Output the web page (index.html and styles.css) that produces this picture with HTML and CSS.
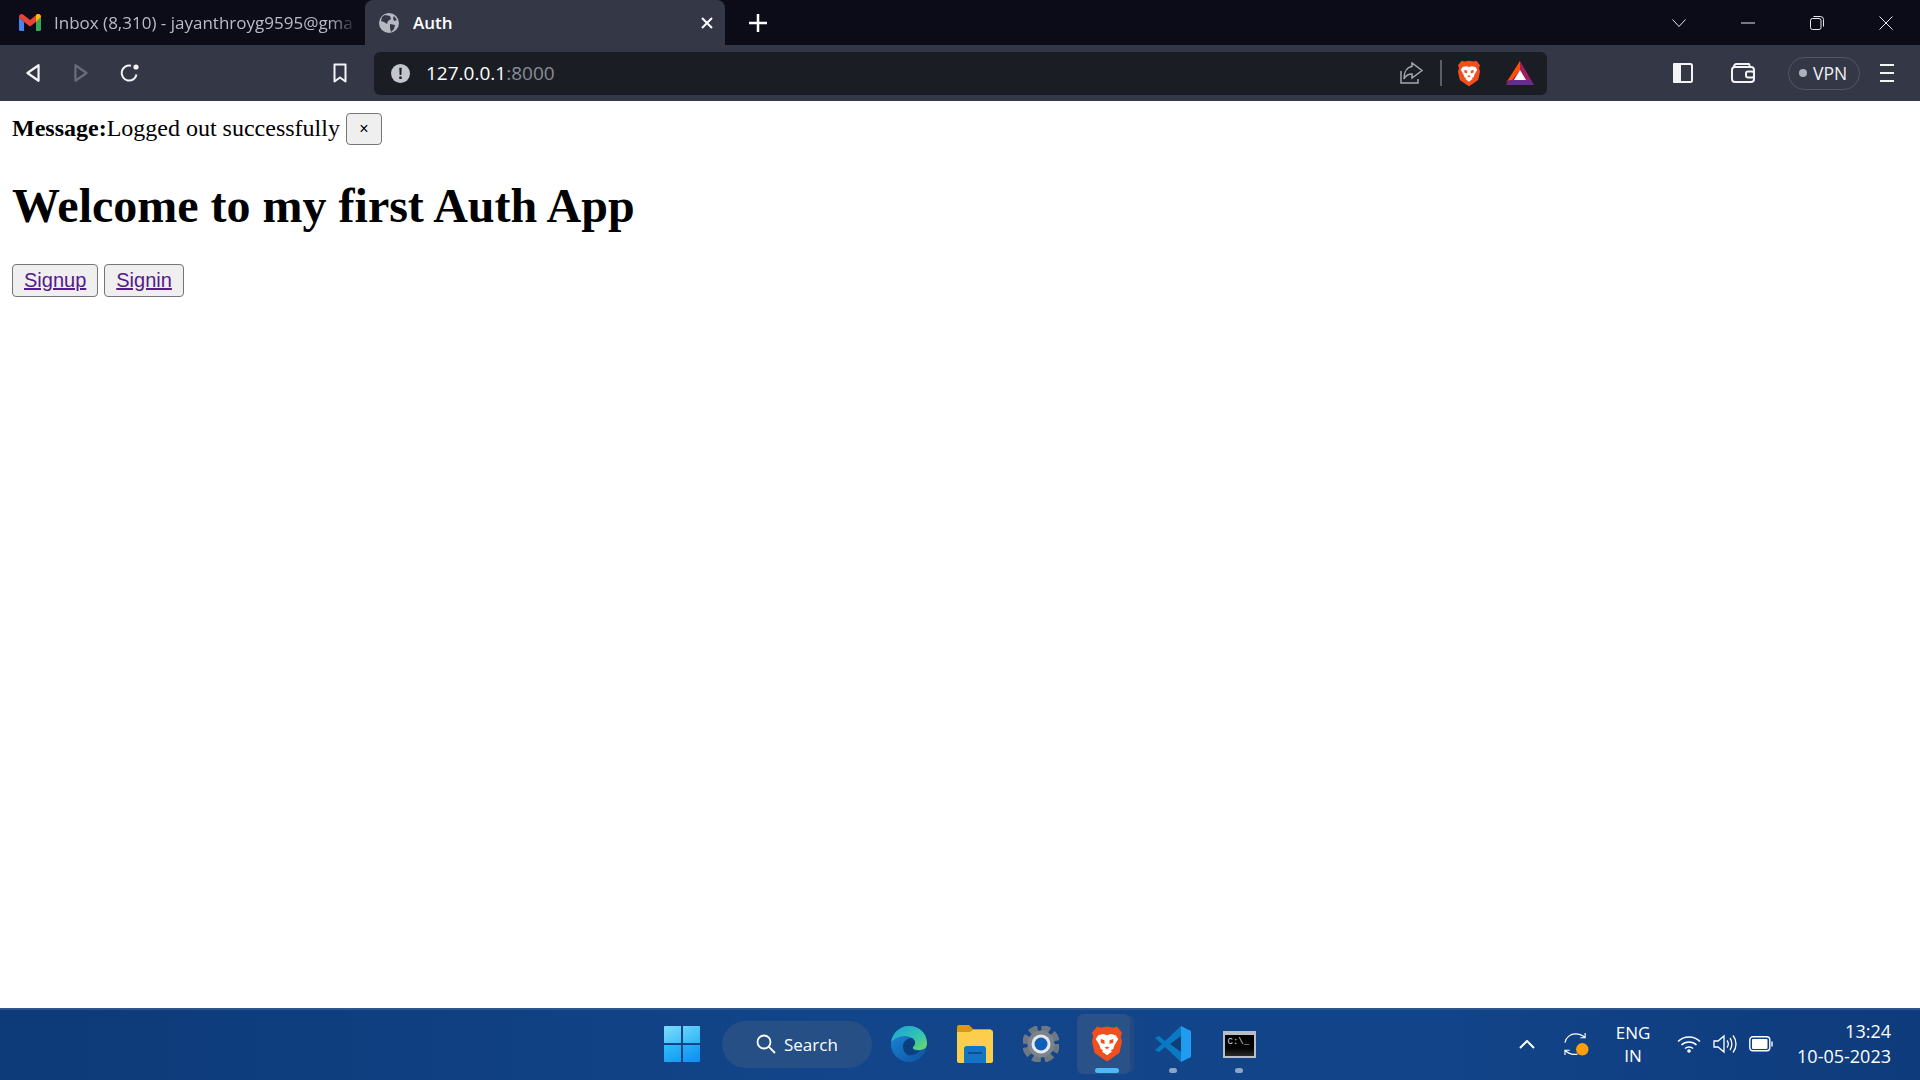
FILE: index.html
```html
<!DOCTYPE html>
<html lang="en">
<head>
    <meta charset="UTF-8">
    <title>Auth</title>
    <link rel="stylesheet" href="styles.css">
</head>
<body>
    <svg class="defs" width="0" height="0">
        <defs>
            <symbol id="brave" viewBox="0 0 24 28">
                <path fill="#f1501e" d="M12 0l5 1 3-1 4 5-1 3 1 4-2 9-7 5-3 2-3-2-7-5-2-9 1-4-1-3 4-5 3 1z"/>
                <path fill="#fff" d="M5 7l4-1 3 1 3-1 4 1 2 3-3 5-1 3-2 1 1 1-4 3-4-3 1-1-2-1-1-3-3-5z"/>
                <path fill="#f1501e" d="M7 10l3 1v3l-3-1zM17 10l-3 1v3l3-1zM10 17l2 1 2-1-2-1z"/>
            </symbol>
        </defs>
    </svg>

    <header class="tabstrip">
        <div class="tab">
            <svg class="favicon" viewBox="0 0 22 17">
                <path fill="#4285f4" d="M0 3v12.500a1.500 1.500 0 0 0 1.500 1.500H5V8z"/>
                <path fill="#34a853" d="M17 8v9h3.500a1.500 1.500 0 0 0 1.500-1.500V3z"/>
                <path fill="#ea4335" d="M5 8L0 3c0-3 3-3.600 4.500-2.300L11 6l6.500-5.300C19 -.6 22 0 22 3l-5 5-6 4.500z"/>
                <path fill="#fbbc04" d="M17 8V1l1-.7C19.500-.5 22 .5 22 3z"/>
            </svg>
            <span class="tab-title">Inbox (8,310) - jayanthroyg9595@gma</span>
        </div>
        <div class="tab tab-active">
            <svg class="favicon globe" viewBox="0 0 20 20">
                <circle cx="10" cy="10" r="10" fill="#b6b8c2"/>
                <path fill="#343746" d="M6 2l5 1 1 3-3 2-1 3-3-2-3-1 1-4zM11 11l5 1-1 4-3 3-1-4zM15 3l3 4-3 1-1-3z"/>
            </svg>
            <span class="tab-name">Auth</span>
            <svg class="tab-close" viewBox="0 0 12 12"><path d="M1 1l10 10M11 1L1 11"/></svg>
        </div>
        <svg class="new-tab" viewBox="0 0 18 18"><path d="M9 0v18M0 9h18"/></svg>
        <div class="window-controls">
            <span class="win-btn"><svg viewBox="0 0 14 8"><path d="M.5.5L7 7.500 13.500.5"/></svg></span>
            <span class="win-btn"><svg viewBox="0 0 14 2"><path d="M0 1h14"/></svg></span>
            <span class="win-btn"><svg viewBox="0 0 14 14"><rect x=".5" y="2.500" width="10.500" height="11" rx="2"/><path d="M3.500.5h7a3 3 0 0 1 3 3v7"/></svg></span>
            <span class="win-btn"><svg viewBox="0 0 14 14"><path d="M.5.5l13 13M13.500.5l-13 13"/></svg></span>
        </div>
    </header>

    <nav class="toolbar">
        <span class="tool tool-back"><svg viewBox="0 0 14 18"><path d="M12 2v14L2 9z"/></svg></span>
        <span class="tool tool-dim"><svg viewBox="0 0 14 18"><path d="M2 2v14l10-7z"/></svg></span>
        <span class="tool tool-reload"><svg viewBox="0 0 20 20"><path d="M16.500 11.500A7.500 7.500 0 1 1 11 2.800"/><circle cx="16" cy="4" r="2.600" fill="#f4f4f6" stroke="none"/></svg></span>
        <span class="tool tool-bookmark"><svg viewBox="0 0 16 20"><path d="M2.500 1.500h11v17L8 14.500l-5.500 4z"/></svg></span>
        <div class="urlbar">
            <svg class="url-info" viewBox="0 0 20 20">
                <circle cx="10" cy="10" r="10" fill="#c5c6cc"/>
                <path fill="#1b1d25" d="M8.700 4h2.600l-.4 7.500H9.100zM8.700 13.200h2.600v2.600H8.700z"/>
            </svg>
            <span class="url-text">127.0.0.1<span class="url-port">:8000</span></span>
            <svg class="url-share" viewBox="0 0 24 22"><path d="M1 9v12h17v-4"/><path d="M12 5V1l10 7.500-10 7.500v-4c-4 0-6 1-8 5 0-7 3-12 8-12.500z"/></svg>
            <span class="url-sep"></span>
            <svg class="url-brave"><use href="#brave"/></svg>
            <svg class="url-bat" viewBox="0 0 28 24">
                <path fill="#9e1f63" d="M14 0l14 24H0z"/>
                <path fill="#ff5000" d="M14 0v9l-8 10H3L0 22z"/>
                <path fill="#662d91" d="M0 24l4-5h20l4 5z"/>
                <path fill="#fff" d="M14 9l6 10H8z"/>
            </svg>
        </div>
        <span class="tool tool-side"><svg viewBox="0 0 20 20"><rect x="1" y="1" width="18" height="18" rx="1.500"/><rect x="1" y="1" width="6" height="18" fill="#f4f4f6"/></svg></span>
        <span class="tool tool-wallet"><svg viewBox="0 0 24 20"><path d="M3 5V3.500A2.500 2.500 0 0 1 5.500 1H18l1.500 4"/><rect x="1" y="4" width="22" height="15" rx="3"/><rect x="15" y="8.500" width="8" height="6" rx="2"/></svg></span>
        <span class="vpn"><span class="vpn-dot"></span>VPN</span>
        <span class="tool tool-menu"><svg viewBox="0 0 14 20"><path d="M0 2h14M0 10h14M0 18h14"/></svg></span>
    </nav>

    <main class="page">
        <div class="message">
            <strong>Message:</strong>Logged out successfully
            <button class="close-btn">×</button>
        </div>
        <h1>Welcome to my first Auth App</h1>
        <button class="link-btn"><a href="#signup">Signup</a></button>
        <button class="link-btn"><a href="#signin">Signin</a></button>
    </main>

    <footer class="taskbar">
        <div class="task-slot">
            <svg class="win-logo" viewBox="0 0 36 36">
                <defs>
                    <linearGradient id="winA" x1="0" y1="0" x2="1" y2="1"><stop offset="0" stop-color="#7fdcfd"/><stop offset="1" stop-color="#2bb5f5"/></linearGradient>
                    <linearGradient id="winB" x1="0" y1="0" x2="1" y2="1"><stop offset="0" stop-color="#2ebdf8"/><stop offset="1" stop-color="#0f8df0"/></linearGradient>
                </defs>
                <path fill="url(#winA)" d="M1 0h16v17H0V1a1 1 0 0 1 1-1zM19 0h16a1 1 0 0 1 1 1v16H19z"/>
                <path fill="url(#winB)" d="M0 19h17v17H1a1 1 0 0 1-1-1zM19 19h17v16a1 1 0 0 1-1 1H19z"/>
            </svg>
        </div>
        <div class="search">
            <svg viewBox="0 0 20 20"><circle cx="8" cy="8" r="6.500"/><path d="M12.700 12.700L19 19"/></svg>
            <span>Search</span>
        </div>
        <div class="task-slot">
            <svg class="edge" viewBox="0 0 36 36">
                <defs>
                    <linearGradient id="edgeTop" x1="0" y1="0" x2="1" y2="1"><stop offset="0" stop-color="#1b9fd8"/><stop offset=".6" stop-color="#33c6b0"/><stop offset="1" stop-color="#74d95c"/></linearGradient>
                    <linearGradient id="edgeLow" x1="0" y1="0" x2="1" y2="1"><stop offset="0" stop-color="#1c8ad8"/><stop offset="1" stop-color="#0c4f9e"/></linearGradient>
                </defs>
                <circle cx="18" cy="18" r="18" fill="url(#edgeLow)"/>
                <path fill="url(#edgeTop)" d="M0 16C2 6 10 0 18 0c10 0 18 7 18 17 0 5-3 7-8 7-4 0-7-1-7-3 3-2 3-7 0-9-6-4-15-2-21 4z"/>
                <path fill="#0b3f80" d="M12 20c0-4 4-8 9-8 4 2 4 7 1 9-1 3 3 4 7 4-3 3-8 5-12 4-4-2-5-6-5-9z"/>
            </svg>
        </div>
        <div class="task-slot">
            <svg class="folder" viewBox="0 0 36 38">
                <path fill="#d99a0b" d="M0 2a2 2 0 0 1 2-2h10l4 4h18v6H0z"/>
                <path fill="#fdcd4c" d="M0 36V7h13l3-2h18a2 2 0 0 1 2 2v29a2 2 0 0 1-2 2H2a2 2 0 0 1-2-2z"/>
                <path fill="#1274c4" d="M7 38V24a3 3 0 0 1 3-3h16a3 3 0 0 1 3 3v14z"/>
                <path fill="#0b4f94" d="M11 27h14v2H11z"/>
            </svg>
        </div>
        <div class="task-slot">
            <svg class="gear" viewBox="0 0 36 36">
                <circle cx="18" cy="18" r="13" fill="none" stroke="#6f7780" stroke-width="12" stroke-dasharray="7 3.200" />
                <circle cx="18" cy="18" r="13.500" fill="#7b838c"/>
                <circle cx="18" cy="18" r="9.500" fill="#e6e9ec"/>
                <circle cx="18" cy="18" r="6.500" fill="#0f5fb5"/>
            </svg>
        </div>
        <div class="task-slot task-active">
            <svg class="task-brave"><use href="#brave"/></svg>
        </div>
        <div class="task-slot task-open">
            <svg class="vscode" viewBox="0 0 36 36">
                <path fill="#0a78c2" d="M26 0l-16 15-6-5-4 2 7 6-7 6 4 2 6-5 16 15z"/>
                <path fill="#1f9cf0" d="M26 0l10 5v26l-10 5z"/>
                <path fill="#0f3f75" d="M26 10L15 18l11 8z"/>
            </svg>
        </div>
        <div class="task-slot task-open">
            <div class="cmd"><span class="cmd-text">C:\_</span></div>
        </div>

        <div class="tray">
            <svg class="tray-up" viewBox="0 0 16 9"><path d="M1 8l7-7 7 7"/></svg>
            <svg class="tray-sync" viewBox="0 0 26 26">
                <path d="M1 11C2 5 7 2 12 2c4 0 7 1 10 4M22 1v5h-5M1 19c4 4 8 5 13 4M1 24v-5h5"/>
                <circle cx="19" cy="18" r="6.500" fill="#ff9d0a" stroke="none"/>
            </svg>
            <div class="tray-lang">ENG<br>IN</div>
            <svg class="tray-wifi" viewBox="0 0 24 18"><path d="M1 6.500c6-6 16-6 22 0M4.500 10c4-4 11-4 15 0M8 13.500c2-2 6-2 8 0"/><circle cx="12" cy="16" r="1.800" fill="#fff" stroke="none"/></svg>
            <svg class="tray-vol" viewBox="0 0 24 20"><path d="M1 7h4l6-5v16l-6-5H1zM14 6.500c1.500 2 1.500 5 0 7M17 4c2.500 3.500 2.500 8.500 0 12M20 1.500c4 5 4 12 0 17"/></svg>
            <svg class="tray-batt" viewBox="0 0 24 16"><rect x=".8" y=".8" width="20" height="14" rx="3"/><rect x="3" y="3" width="15.500" height="10" rx="1" fill="#fff" stroke="none"/><path d="M23 5.500v5"/></svg>
            <div class="clock">13:24<br>10-05-2023</div>
        </div>
    </footer>
</body>
</html>
```

FILE: styles.css
```css
* {
    box-sizing: border-box;
}
html, body {
    height: 100%;
    margin: 0;
}
body {
    display: flex;
    flex-direction: column;
    overflow: hidden;
    background: #fff;
    font-family: "Liberation Serif", serif;
}
.defs {
    position: absolute;
}

/* browser tabs */
.tabstrip {
    display: flex;
    align-items: center;
    height: 45px;
    background: #0b0c17;
    font-family: "Open Sans", sans-serif;
    font-size: 17px;
    color: #b9bcc8;
}
.tab {
    display: flex;
    align-items: center;
    width: 365px;
    height: 45px;
    padding-left: 19px;
    flex-shrink: 0;
}
.favicon {
    width: 22px;
    height: 17px;
    flex-shrink: 0;
}
.tab-title {
    margin-left: 13px;
    white-space: nowrap;
    -webkit-mask-image: linear-gradient(to right, #000 275px, transparent 304px);
    mask-image: linear-gradient(to right, #000 275px, transparent 304px);
}
.tab-active {
    width: 360px;
    padding-left: 14px;
    background: #343746;
    border-radius: 8px 8px 0 0;
    color: #fff;
    font-weight: 600;
}
.globe {
    width: 20px;
    height: 20px;
}
.tab-name {
    margin-left: 14px;
}
.tab-close {
    width: 12px;
    height: 12px;
    margin-left: auto;
    margin-right: 12px;
    fill: none;
    stroke: #fff;
    stroke-width: 2;
}
.new-tab {
    width: 18px;
    height: 18px;
    margin-left: 24px;
    fill: none;
    stroke: #fff;
    stroke-width: 2.500;
}
.window-controls {
    display: flex;
    align-items: center;
    margin-left: auto;
}
.win-btn {
    display: flex;
    justify-content: center;
    width: 69px;
}
.win-btn svg {
    width: 14px;
    height: 14px;
    fill: none;
    stroke: #e8e8ec;
    stroke-width: 1;
}

/* address row */
.toolbar {
    display: flex;
    align-items: center;
    height: 56px;
    padding-left: 9px;
    background: #343746;
}
.tool {
    display: flex;
    justify-content: center;
    align-items: center;
    width: 48px;
    height: 40px;
    flex-shrink: 0;
}
.tool svg {
    width: 20px;
    height: 20px;
    fill: none;
    stroke: #f4f4f6;
    stroke-width: 2;
    stroke-linejoin: round;
}
.tool-dim svg {
    stroke: #6a6c79;
}
.tool-reload {
    padding-left: 2px;
}
.tool-bookmark {
    margin-left: 163px;
}
.urlbar {
    display: flex;
    align-items: center;
    width: 1173px;
    height: 43px;
    margin-left: 10px;
    padding: 0 13px 0 17px;
    flex-shrink: 0;
    background: #1b1d25;
    border-radius: 6px;
    font-family: "Open Sans", sans-serif;
    font-size: 19px;
    color: #fff;
}
.url-info {
    width: 19px;
    height: 19px;
}
.url-text {
    margin-left: 16px;
}
.url-port {
    color: #8a8c96;
}
.url-share {
    width: 24px;
    height: 22px;
    margin-left: auto;
    fill: none;
    stroke: #a5a7ae;
    stroke-width: 1.500;
}
.url-sep {
    width: 2px;
    height: 26px;
    margin: 0 16px;
    background: #5c5e68;
}
.url-brave {
    width: 22px;
    height: 27px;
}
.url-bat {
    width: 28px;
    height: 24px;
    margin-left: 26px;
}
.tool-side {
    margin-left: 112px;
}
.tool-wallet {
    margin-left: 12px;
}
.tool-wallet svg {
    width: 24px;
}
.vpn {
    display: flex;
    align-items: center;
    width: 72px;
    height: 33px;
    margin-left: 21px;
    padding-left: 10px;
    flex-shrink: 0;
    border: 1.500px solid #545766;
    border-radius: 17px;
    font-family: "Open Sans", sans-serif;
    font-size: 17.500px;
    color: #eef0f4;
}
.vpn-dot {
    width: 8px;
    height: 8px;
    margin-right: 6px;
    background: #aeb1bc;
    border-radius: 50%;
}
.tool-menu {
    width: 54px;
}
.tool-menu svg {
    width: 14px;
}

/* page content */
.page {
    flex: 1;
    padding: 12px;
    color: #000;
    font-size: 24px;
}
.message {
    height: 32px;
    line-height: 30px;
}
.close-btn {
    width: 36px;
    height: 32px;
    padding: 0;
    vertical-align: top;
    background: #efefef;
    border: 1.500px solid #767676;
    border-radius: 4px;
    font-family: "Liberation Sans", sans-serif;
    font-size: 16px;
    color: #000;
}
h1 {
    margin: 32px 0 29px;
    font-size: 48px;
    line-height: 58px;
}
.link-btn {
    height: 33px;
    padding: 0 11px;
    vertical-align: top;
    background: #efefef;
    border: 1.500px solid #767676;
    border-radius: 4px;
    font-family: "Liberation Sans", sans-serif;
    font-size: 20px;
}
.link-btn a {
    color: #551a8b;
}

/* windows taskbar */
.taskbar {
    display: flex;
    align-items: center;
    height: 72px;
    padding: 0 0 2px 649px;
    flex-shrink: 0;
    background: linear-gradient(90deg, #0d3a78 0%, #12458a 45%, #124489 75%, #0e3b7b 100%);
    border-top: 2px solid #2c568c;
}
.task-slot {
    position: relative;
    display: flex;
    justify-content: center;
    align-items: center;
    width: 66px;
    height: 60px;
    flex-shrink: 0;
}
.win-logo {
    width: 36px;
    height: 36px;
}
.search {
    display: flex;
    align-items: center;
    width: 150px;
    height: 47px;
    margin: 0 4px 0 7px;
    padding-left: 34px;
    flex-shrink: 0;
    background: #264f86;
    border-radius: 24px;
    font-family: "Open Sans", sans-serif;
    font-size: 17px;
    color: #fff;
}
.search svg {
    width: 20px;
    height: 20px;
    margin-right: 8px;
    fill: none;
    stroke: #fff;
    stroke-width: 1.800;
}
.edge {
    width: 36px;
    height: 36px;
}
.folder {
    width: 36px;
    height: 38px;
}
.gear {
    width: 36px;
    height: 36px;
}
.task-active::before {
    content: "";
    position: absolute;
    top: 0;
    bottom: 0;
    left: 3px;
    width: 53px;
    background: #2b5288;
    border-radius: 6px;
    box-shadow: 6px 0 0 -2px #234a80;
}
.task-active::after {
    content: "";
    position: absolute;
    bottom: 1px;
    left: 21px;
    width: 24px;
    height: 5px;
    background: #4fb8f8;
    border-radius: 3px;
}
.task-brave {
    position: relative;
    width: 30px;
    height: 36px;
}
.task-open::after {
    content: "";
    position: absolute;
    bottom: 1px;
    left: 29px;
    width: 8px;
    height: 5px;
    background: #8ea6c6;
    border-radius: 3px;
}
.vscode {
    width: 36px;
    height: 36px;
}
.cmd {
    width: 33px;
    height: 27px;
    padding: 3px 0 0 3px;
    background: linear-gradient(#000 60%, #2a2a2a);
    border: 2px solid #b9bec6;
    border-top-width: 4px;
    overflow: hidden;
}
.cmd-text {
    display: block;
    font-family: "Liberation Mono", monospace;
    font-size: 9px;
    line-height: 9px;
    color: #ddd;
}
.tray {
    display: flex;
    align-items: center;
    margin-left: auto;
    padding-right: 29px;
    color: #fff;
    font-family: "Open Sans", sans-serif;
    font-size: 17px;
}
.tray svg {
    fill: none;
    stroke: #fff;
    flex-shrink: 0;
}
.tray-up {
    width: 16px;
    height: 9px;
    margin-right: 29px;
    stroke-width: 2;
}
.tray-sync {
    width: 25px;
    height: 25px;
    stroke-width: 1.200;
}
.tray-lang {
    width: 62px;
    margin-left: 13px;
    text-align: center;
    line-height: 23px;
}
.tray-wifi {
    width: 24px;
    height: 18px;
    margin-left: 13px;
    stroke-width: 1.500;
}
.tray-vol {
    width: 24px;
    height: 20px;
    margin-left: 12px;
    stroke-width: 1.300;
}
.tray-batt {
    width: 24px;
    height: 16px;
    margin-left: 12px;
    stroke-width: 1.400;
}
.clock {
    margin-left: 24px;
    text-align: right;
    font-size: 18px;
    line-height: 25px;
}
```
